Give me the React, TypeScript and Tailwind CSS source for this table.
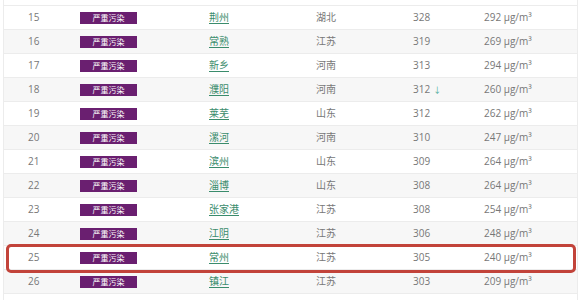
const rows: [number, string, string, string, string, boolean?][] = [
  [15, '荆州', '湖北', '328', '292'],
  [16, '常熟', '江苏', '319', '269'],
  [17, '新乡', '河南', '313', '294'],
  [18, '濮阳', '河南', '312', '260', true],
  [19, '莱芜', '山东', '312', '262'],
  [20, '漯河', '河南', '310', '247'],
  [21, '滨州', '山东', '309', '264'],
  [22, '淄博', '山东', '308', '264'],
  [23, '张家港', '江苏', '308', '254'],
  [24, '江阴', '江苏', '306', '248'],
  [25, '常州', '江苏', '305', '240'],
  [26, '镇江', '江苏', '303', '209'],
];

export default function App() {
  return (
    <div
      className="relative w-[583px] h-[300px] overflow-hidden bg-white text-[10px] text-[#777]"
      style={{ fontFamily: '"Open Sans", "Noto Sans CJK SC", sans-serif' }}
    >
      <div className="ml-[3px] w-[575px] border-x border-[#ececec]">
        <div className="h-[5px] bg-white" />
        {rows.map(([rank, city, prov, aqi, pm, down], i) => (
          <div
            key={rank}
            className={`flex items-center h-[24px] border-t border-[#ececec] ${i % 2 === 1 ? 'bg-[#f7f7f7]' : 'bg-white'}`}
          >
            <div className="w-[76px] pl-[24px]">{rank}</div>
            <div className="w-[129px]">
              <span className="flex items-center justify-center w-[57px] h-[12px] bg-[#6a1f70] text-white text-[8px] leading-none">
                严重污染
              </span>
            </div>
            <div className="w-[107px] text-[#3a8c6c] underline underline-offset-2">{city}</div>
            <div className="w-[90px]">{prov}</div>
            <div className="w-[78px] pl-[7px] flex items-center gap-[3px]">
              <span>{aqi}</span>
              {down && <span className="text-[#4aaa99] text-[8px]">↓</span>}
            </div>
            <div>{pm} μg/m³</div>
          </div>
        ))}
        <div className="h-[8px] border-t border-[#ececec] bg-white" />
      </div>
      <div className="absolute left-[6px] top-[244px] w-[570px] h-[29px] rounded-[5px] border-[3px] border-[#c2433a]" />
    </div>
  );
}
